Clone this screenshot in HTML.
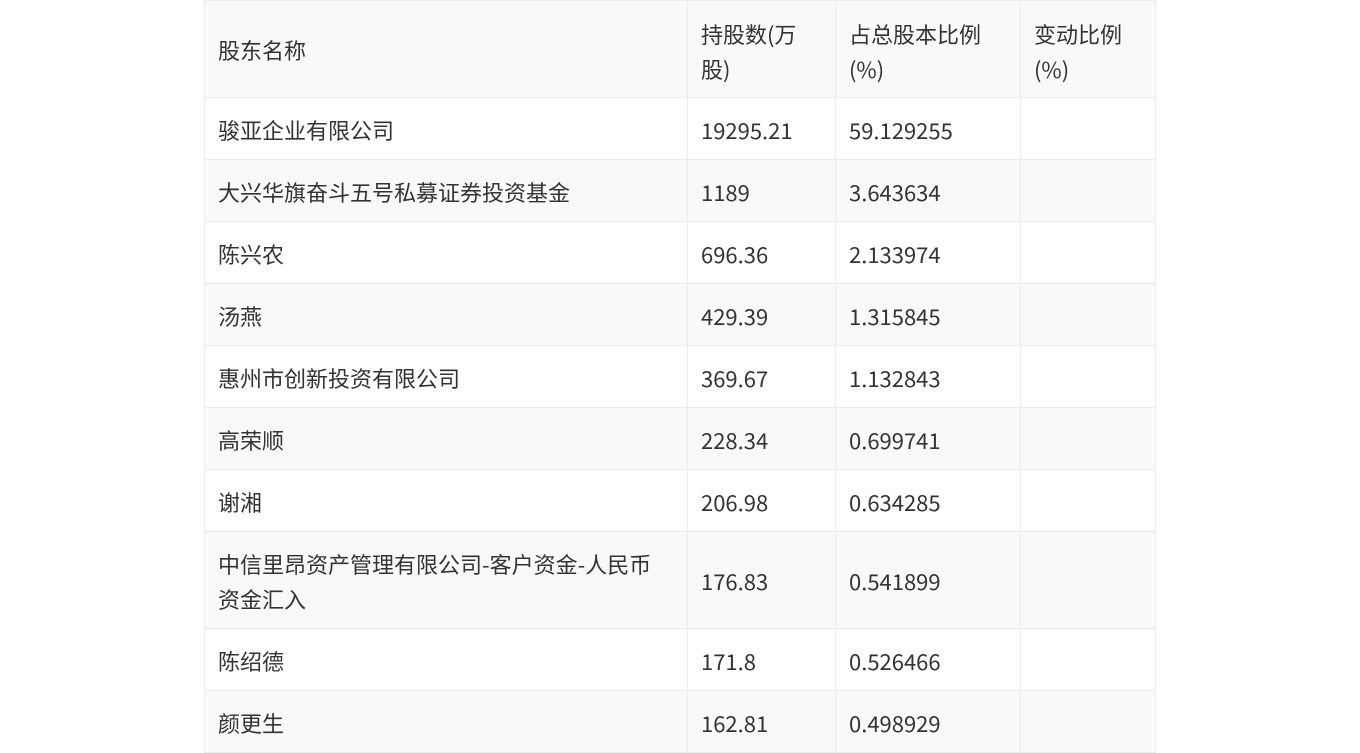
<!DOCTYPE html>
<html><head><meta charset="utf-8"><style>
html,body{margin:0;padding:0;background:#fff;width:1360px;height:752px;overflow:hidden}
table{position:absolute;left:204px;top:0;border-collapse:collapse;font-family:"Noto Sans CJK SC","Liberation Sans",sans-serif;font-size:22px;color:#333;table-layout:fixed;width:951px}
td{border:1px solid #ececec;padding:3px 13px 0;vertical-align:middle;line-height:35px;height:62px;box-sizing:border-box}
tr:nth-child(odd) td{background:#f9f9f9}
tr:nth-child(even) td{background:#fff}
tr.h td{height:97px;vertical-align:top;padding-top:16px}
tr.h td:first-child{vertical-align:middle;padding-top:3px}
tr.t td{height:97px}
</style></head><body>
<table>
<colgroup><col style="width:483px"><col style="width:148px"><col style="width:185px"><col style="width:135px"></colgroup>
<tr class="h"><td>股东名称</td><td>持股数(万股)</td><td>占总股本比例(%)</td><td>变动比例(%)</td></tr>
<tr><td>骏亚企业有限公司</td><td>19295.21</td><td>59.129255</td><td></td></tr>
<tr><td>大兴华旗奋斗五号私募证券投资基金</td><td>1189</td><td>3.643634</td><td></td></tr>
<tr><td>陈兴农</td><td>696.36</td><td>2.133974</td><td></td></tr>
<tr><td>汤燕</td><td>429.39</td><td>1.315845</td><td></td></tr>
<tr><td>惠州市创新投资有限公司</td><td>369.67</td><td>1.132843</td><td></td></tr>
<tr><td>高荣顺</td><td>228.34</td><td>0.699741</td><td></td></tr>
<tr><td>谢湘</td><td>206.98</td><td>0.634285</td><td></td></tr>
<tr class="t"><td>中信里昂资产管理有限公司-客户资金-人民币<br>资金汇入</td><td>176.83</td><td>0.541899</td><td></td></tr>
<tr><td>陈绍德</td><td>171.8</td><td>0.526466</td><td></td></tr>
<tr><td>颜更生</td><td>162.81</td><td>0.498929</td><td></td></tr>
</table>
</body></html>
